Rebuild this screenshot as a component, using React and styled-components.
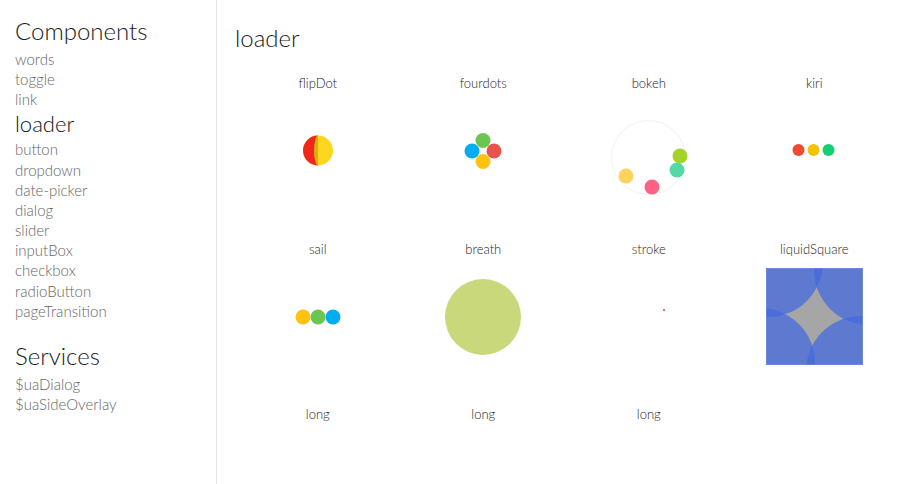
import React from 'react';
import styled, { createGlobalStyle } from 'styled-components';

const GlobalStyle = createGlobalStyle`
    body {
        margin: 0;
        font-family: Lato, "Open Sans", sans-serif;
        font-weight: 300;
        background: #fff;
    }
`;

const Page = styled.div`
    display: flex;
    width: 100%;
    height: 100vh;
    overflow: hidden;
`;

const Sidebar = styled.nav`
    width: 201px;
    flex-shrink: 0;
    padding: 13px 0 0 15px;
    border-right: 1px solid #e6e6e6;
    box-sizing: content-box;
`;

const SideTitle = styled.h2`
    margin: ${props => (props.$spaced ? '17px' : '0')} 0 0 0;
    font-size: 24px;
    font-weight: 300;
    line-height: 36px;
    color: #1a1a1a;
`;

const SideLink = styled.a`
    display: block;
    font-size: ${props => (props.$active ? '22px' : '15px')};
    line-height: ${props => (props.$active ? '30px' : '20.15px')};
    color: ${props => (props.$active ? '#111' : '#666')};
    font-weight: 300;
    text-decoration: none;
    cursor: pointer;
`;

const Main = styled.main`
    flex: 1;
    padding: 20px 0 0 18px;
`;

const MainTitle = styled.h1`
    margin: 0 0 17px 0;
    font-size: 24px;
    font-weight: 300;
    line-height: 36px;
    color: #1a1a1a;
`;

const Grid = styled.div`
    display: grid;
    grid-template-columns: repeat(4, 165.5px);
    grid-auto-rows: 165.5px;
`;

const Cell = styled.div`
    display: flex;
    flex-direction: column;
    align-items: center;
`;

const Label = styled.div`
    font-size: 13px;
    font-weight: 300;
    line-height: 20px;
    color: #222;
`;

const Stage = styled.div`
    width: 100px;
    height: 100px;
    margin-top: 8px;
    display: flex;
    align-items: center;
    justify-content: center;
`;

const FlipDot = () => (
    <svg width="100" height="100" viewBox="0 0 100 100">
        <circle cx="50" cy="49.5" r="15" fill="#ffd61f" />
        <path d="M50 34.5 A15 15 0 0 0 50 64.5 Z" fill="#f0281c" />
        <path d="M50 34.5 A4 15 0 0 0 50 64.5 Z" fill="#d9ae12" />
    </svg>
);

const FourDots = () => (
    <svg width="100" height="100" viewBox="0 0 100 100">
        <circle cx="50" cy="39.5" r="7.5" fill="#6cc551" />
        <circle cx="39" cy="50" r="7.5" fill="#00aeef" />
        <circle cx="61" cy="50" r="7.5" fill="#e8534b" />
        <circle cx="50" cy="60.5" r="7.5" fill="#ffc20e" />
    </svg>
);

const Bokeh = () => (
    <svg width="100" height="100" viewBox="0 0 100 100" style={{ overflow: 'visible' }}>
        <circle cx="49.5" cy="56.5" r="37" fill="none" stroke="#f2f2f2" strokeWidth="1" />
        <circle cx="27" cy="75" r="7.5" fill="#ffd25e" />
        <circle cx="53" cy="86" r="7.5" fill="#ff6384" />
        <circle cx="78" cy="69" r="7.5" fill="#55d8a7" />
        <circle cx="81" cy="55" r="7.5" fill="#a3d22a" />
    </svg>
);

const Kiri = () => (
    <svg width="100" height="100" viewBox="0 0 100 100">
        <circle cx="34.5" cy="49" r="6" fill="#ee4a32" />
        <circle cx="49.5" cy="49" r="6" fill="#f5c400" />
        <circle cx="64.5" cy="49" r="6" fill="#14cf6e" />
    </svg>
);

const Sail = () => (
    <svg width="100" height="100" viewBox="0 0 100 100">
        <circle cx="35" cy="50" r="7.5" fill="#ffc20e" />
        <circle cx="50" cy="50" r="7.5" fill="#6cc551" />
        <circle cx="65" cy="50" r="7.5" fill="#00aeef" />
    </svg>
);

const Breath = () => (
    <svg width="100" height="100" viewBox="0 0 100 100">
        <circle cx="50" cy="50" r="38" fill="#c8d87a" />
    </svg>
);

const Stroke = () => (
    <svg width="100" height="100" viewBox="0 0 100 100">
        <circle cx="65" cy="43" r="1.2" fill="#ff6384" />
    </svg>
);

const LiquidSquare = () => (
    <svg width="97" height="97" viewBox="0 0 97 97">
        <defs>
            <clipPath id="lsq">
                <rect x="0" y="0" width="97" height="97" />
            </clipPath>
        </defs>
        <g clipPath="url(#lsq)">
            <rect x="0" y="0" width="97" height="97" fill="#a6a6a6" />
            <circle cx="2" cy="-6" r="55" fill="rgba(65,105,225,0.72)" />
            <circle cx="103" cy="2" r="55" fill="rgba(65,105,225,0.72)" />
            <circle cx="95" cy="103" r="55" fill="rgba(65,105,225,0.72)" />
            <circle cx="-6" cy="95" r="55" fill="rgba(65,105,225,0.72)" />
        </g>
        <rect x="0.5" y="0.5" width="96" height="96" fill="none" stroke="rgba(120,145,215,0.6)" />
    </svg>
);

const loaders = [
    { name: 'flipDot', Demo: FlipDot },
    { name: 'fourdots', Demo: FourDots },
    { name: 'bokeh', Demo: Bokeh },
    { name: 'kiri', Demo: Kiri },
    { name: 'sail', Demo: Sail },
    { name: 'breath', Demo: Breath },
    { name: 'stroke', Demo: Stroke },
    { name: 'liquidSquare', Demo: LiquidSquare },
    { name: 'long', Demo: null },
    { name: 'long', Demo: null },
    { name: 'long', Demo: null },
];

const components = [
    'words', 'toggle', 'link', 'loader', 'button', 'dropdown', 'date-picker',
    'dialog', 'slider', 'inputBox', 'checkbox', 'radioButton', 'pageTransition',
];

const services = ['$uaDialog', '$uaSideOverlay'];

export default function App() {
    return (
        <Page>
            <GlobalStyle />
            <Sidebar>
                <SideTitle>Components</SideTitle>
                {components.map(c => (
                    <SideLink key={c} $active={c === 'loader'}>{c}</SideLink>
                ))}
                <SideTitle $spaced>Services</SideTitle>
                {services.map(s => (
                    <SideLink key={s}>{s}</SideLink>
                ))}
            </Sidebar>
            <Main>
                <MainTitle>loader</MainTitle>
                <Grid>
                    {loaders.map(({ name, Demo }, i) => (
                        <Cell key={i}>
                            <Label>{name}</Label>
                            <Stage>{Demo && <Demo />}</Stage>
                        </Cell>
                    ))}
                </Grid>
            </Main>
        </Page>
    );
}
